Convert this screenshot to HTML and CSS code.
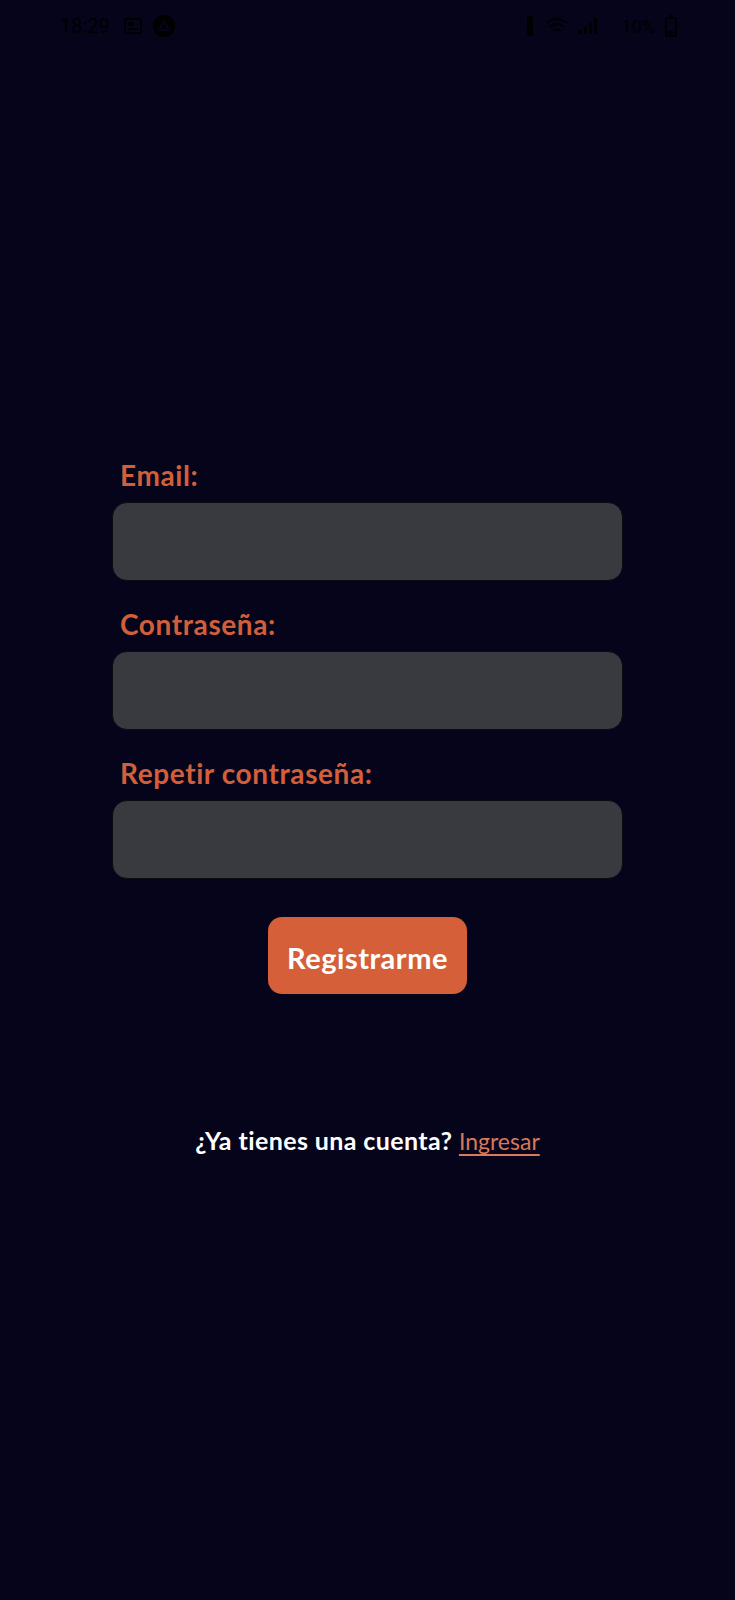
FILE: index.html
```html
<!DOCTYPE html>
<html lang="es">
<head>
<meta charset="utf-8">
<title>Registro</title>
<link rel="stylesheet" href="styles.css">
</head>
<body>
<div class="screen">
  <div class="statusbar">
    <div class="sb-left">
      <span class="sb-time">18:29</span>
      <svg class="sb-icon" width="18" height="16" viewBox="0 0 18 16"><rect x="1" y="1" width="16" height="14" rx="1.5" fill="none" stroke="#000" stroke-width="2"/><rect x="4" y="4" width="6" height="4" fill="#000"/><rect x="4" y="10" width="10" height="2" fill="#000"/></svg>
      <svg class="sb-icon" width="24" height="24" viewBox="0 0 24 24"><circle cx="12" cy="12" r="11" fill="#000"/><path d="M7 16 L12 7 L17 16 Z" fill="none" stroke="#05041a" stroke-width="2"/></svg>
    </div>
    <div class="sb-right">
      <svg class="sb-icon" width="12" height="24" viewBox="0 0 12 24"><rect x="3" y="2" width="6" height="20" rx="3" fill="#000"/></svg>
      <svg class="sb-icon" width="22" height="18" viewBox="0 0 22 18"><path d="M1 6 Q11 -2 21 6 M4 10 Q11 4 18 10 M7 14 Q11 11 15 14" fill="none" stroke="#000" stroke-width="2"/></svg>
      <svg class="sb-icon" width="20" height="18" viewBox="0 0 20 18"><rect x="1" y="13" width="3" height="4" fill="#000"/><rect x="6" y="10" width="3" height="7" fill="#000"/><rect x="11" y="6" width="3" height="11" fill="#000"/><rect x="16" y="1" width="3" height="16" fill="#000"/></svg>
      <span class="sb-batt">10%</span>
      <svg class="sb-icon" width="12" height="22" viewBox="0 0 12 22"><rect x="4" y="0" width="4" height="3" fill="#000"/><rect x="1" y="3" width="10" height="18" rx="1.5" fill="none" stroke="#000" stroke-width="2"/><rect x="3" y="16" width="6" height="3" fill="#000"/></svg>
    </div>
  </div>

  <form class="form">
    <div class="field">
      <label class="label">Email:</label>
      <div class="input"></div>
    </div>
    <div class="field">
      <label class="label">Contraseña:</label>
      <div class="input"></div>
    </div>
    <div class="field">
      <label class="label">Repetir contraseña:</label>
      <div class="input"></div>
    </div>
    <div class="actions">
      <button type="button" class="btn">Registrarme</button>
    </div>
  </form>

  <p class="login">¿Ya tienes una cuenta? <a class="link" href="#">Ingresar</a></p>
</div>
</body>
</html>
```

FILE: styles.css
```css
* { box-sizing: border-box; }
html, body {
  margin: 0;
  padding: 0;
  background: #05041a;
}
.screen {
  min-height: 1600px;
  background: #05041a;
  font-family: Lato, "Open Sans", sans-serif;
}
.statusbar {
  height: 52px;
  display: flex;
  justify-content: space-between;
  align-items: center;
  padding: 0 58px 0 60px;
  color: #000;
}
.sb-left, .sb-right {
  display: flex;
  align-items: center;
  gap: 10px;
}
.sb-time {
  font-family: Roboto, sans-serif;
  font-size: 20px;
  color: #000;
  margin-right: 4px;
}
.sb-batt {
  font-family: Roboto, sans-serif;
  font-size: 18px;
  color: #000;
  margin-left: 14px;
}
.sb-icon { display: block; }

.form {
  margin: 0 auto;
  padding-top: 406px;
  width: 511px;
  display: flex;
  flex-direction: column;
  gap: 26px;
}
.field {
  display: flex;
  flex-direction: column;
  gap: 10px;
}
.label {
  font-size: 28px;
  line-height: 34px;
  font-weight: 700;
  color: #d35f3a;
  padding-left: 8px;
  letter-spacing: 0.6px;
}
.input {
  height: 79px;
  border-radius: 15px;
  background: #393a3f;
  border: 1.5px solid #0b0b10;
}
.actions {
  display: flex;
  justify-content: center;
  margin-top: 12px;
}
.btn {
  width: 199px;
  height: 77px;
  border: none;
  border-radius: 14px;
  background: #d45f38;
  color: #ffffff;
  font-family: Lato, "Open Sans", sans-serif;
  font-size: 29px;
  font-weight: 700;
  letter-spacing: 0.5px;
  padding: 4px 0 0 0;
  cursor: pointer;
}
.login {
  margin: 131px 0 0 0;
  text-align: center;
  font-size: 25px;
  line-height: 30px;
  font-weight: 700;
  color: #ffffff;
  letter-spacing: 0.4px;
}
.link {
  color: #d9785a;
  font-size: 23px;
  font-weight: 400;
  letter-spacing: 0;
  text-decoration: underline;
  text-underline-offset: 4px;
}
```
